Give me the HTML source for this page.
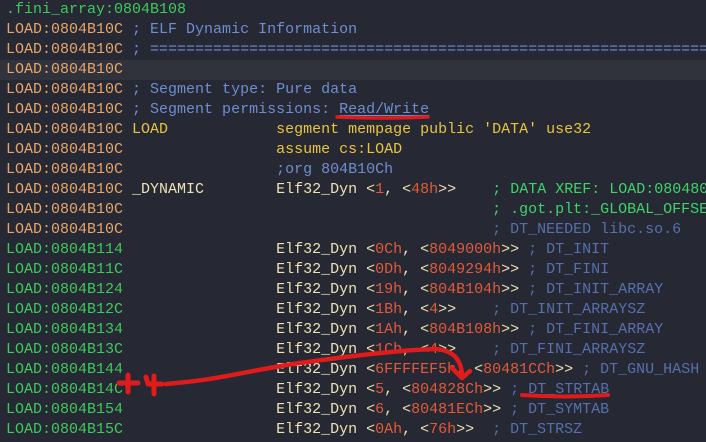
<!DOCTYPE html>
<html><head><meta charset="utf-8"><style>
html,body{margin:0;padding:0;background:#262833;width:706px;height:442px;overflow:hidden}
.r{position:absolute;left:0;width:706px;height:20px;line-height:20px;white-space:pre;font-family:"Liberation Mono",monospace;font-size:15px;padding-left:6px;box-sizing:border-box;overflow:hidden}
.a{color:#e8a56a}.g{color:#3fc95c}.c{color:#6f8ed0}.d{color:#5670ae}.y{color:#e9c53e}.w{color:#ece2b4}.n{color:#e25a3a}.x{color:#3fd46a}
.u{text-decoration:underline;text-decoration-thickness:1px;text-underline-offset:2px}
</style></head><body>
<div class="r g" style="top:0">.fini_array:0804B108</div>
<div class="r" style="top:20px"><span class="a">LOAD:0804B10C</span> <span class="c">; ELF Dynamic Information</span></div>
<div class="r" style="top:40px"><span class="a">LOAD:0804B10C</span> <span class="c">; ====================================================================</span></div>
<div class="r" style="top:60px;background:#30323c"><span class="a">LOAD:0804B10C</span></div>
<div class="r" style="top:80px"><span class="a">LOAD:0804B10C</span> <span class="c">; Segment type: Pure data</span></div>
<div class="r" style="top:100px"><span class="a">LOAD:0804B10C</span> <span class="c">; Segment permissions: <span class="u">Read/Write</span></span></div>
<div class="r" style="top:120px"><span class="a">LOAD:0804B10C</span> <span class="y">LOAD</span>            <span class="y">segment mempage public 'DATA' use32</span></div>
<div class="r" style="top:140px"><span class="a">LOAD:0804B10C</span>                 <span class="y">assume cs:LOAD</span></div>
<div class="r" style="top:160px"><span class="a">LOAD:0804B10C</span>                 <span class="c">;org 804B10Ch</span></div>
<div class="r" style="top:180px"><span class="a">LOAD:0804B10C</span> <span class="w">_DYNAMIC</span>        <span class="w">Elf32_Dyn &lt;</span><span class="n">1</span><span class="w">, &lt;</span><span class="n">48h</span><span class="w">&gt;&gt;</span>    <span class="x">; DATA XREF: LOAD:08048080</span></div>
<div class="r" style="top:200px"><span class="a">LOAD:0804B10C</span>                                         <span class="x">; .got.plt:_GLOBAL_OFFSET</span></div>
<div class="r" style="top:220px"><span class="a">LOAD:0804B10C</span>                                         <span class="d">; DT_NEEDED libc.so.6</span></div>
<div class="r" style="top:240px"><span class="g">LOAD:0804B114</span>                 <span class="w">Elf32_Dyn &lt;</span><span class="n">0Ch</span><span class="w">, &lt;</span><span class="n">8049000h</span><span class="w">&gt;&gt;</span> <span class="d">; DT_INIT</span></div>
<div class="r" style="top:260px"><span class="g">LOAD:0804B11C</span>                 <span class="w">Elf32_Dyn &lt;</span><span class="n">0Dh</span><span class="w">, &lt;</span><span class="n">8049294h</span><span class="w">&gt;&gt;</span> <span class="d">; DT_FINI</span></div>
<div class="r" style="top:280px"><span class="g">LOAD:0804B124</span>                 <span class="w">Elf32_Dyn &lt;</span><span class="n">19h</span><span class="w">, &lt;</span><span class="n">804B104h</span><span class="w">&gt;&gt;</span> <span class="d">; DT_INIT_ARRAY</span></div>
<div class="r" style="top:300px"><span class="g">LOAD:0804B12C</span>                 <span class="w">Elf32_Dyn &lt;</span><span class="n">1Bh</span><span class="w">, &lt;</span><span class="n">4</span><span class="w">&gt;&gt;</span>    <span class="d">; DT_INIT_ARRAYSZ</span></div>
<div class="r" style="top:320px"><span class="g">LOAD:0804B134</span>                 <span class="w">Elf32_Dyn &lt;</span><span class="n">1Ah</span><span class="w">, &lt;</span><span class="n">804B108h</span><span class="w">&gt;&gt;</span> <span class="d">; DT_FINI_ARRAY</span></div>
<div class="r" style="top:340px"><span class="g">LOAD:0804B13C</span>                 <span class="w">Elf32_Dyn &lt;</span><span class="n">1Ch</span><span class="w">, &lt;</span><span class="n">4</span><span class="w">&gt;&gt;</span>    <span class="d">; DT_FINI_ARRAYSZ</span></div>
<div class="r" style="top:360px"><span class="g">LOAD:0804B144</span>                 <span class="w">Elf32_Dyn &lt;</span><span class="n">6FFFFEF5h</span><span class="w">, &lt;</span><span class="n">80481CCh</span><span class="w">&gt;&gt;</span> <span class="d">; DT_GNU_HASH</span></div>
<div class="r" style="top:380px"><span class="g">LOAD:0804B14C</span>                 <span class="w">Elf32_Dyn &lt;</span><span class="n">5</span><span class="w">, &lt;</span><span class="n">804828Ch</span><span class="w">&gt;&gt;</span> <span class="d">; <span class="u">DT_STRTAB</span></span></div>
<div class="r" style="top:400px"><span class="g">LOAD:0804B154</span>                 <span class="w">Elf32_Dyn &lt;</span><span class="n">6</span><span class="w">, &lt;</span><span class="n">80481ECh</span><span class="w">&gt;&gt;</span> <span class="d">; DT_SYMTAB</span></div>
<div class="r" style="top:420px"><span class="g">LOAD:0804B15C</span>                 <span class="w">Elf32_Dyn &lt;</span><span class="n">0Ah</span><span class="w">, &lt;</span><span class="n">76h</span><span class="w">&gt;&gt;</span>  <span class="d">; DT_STRSZ</span></div>
<svg width="706" height="442" style="position:absolute;left:0;top:0" fill="none" stroke="#e01b1b" stroke-linecap="round" stroke-linejoin="round">
<path d="M337 117 Q382 119 428 117" stroke-width="3.5"/>
<path d="M522 395 Q565 398 608 395" stroke-width="4"/>
<path d="M119 383 L138 383 M128 375 L128 392" stroke-width="5"/>
<path d="M146 377 L148 384 L162 384 M154 376 L154 394" stroke-width="5"/>
<path d="M166 384 C220 380 250 370 300 363 C350 356 400 350 435 349 C455 350 462 362 462 377" stroke-width="4.5"/>
<path d="M452 368 L462 378 L470 371" stroke-width="4.5"/>
</svg>
</body></html>
